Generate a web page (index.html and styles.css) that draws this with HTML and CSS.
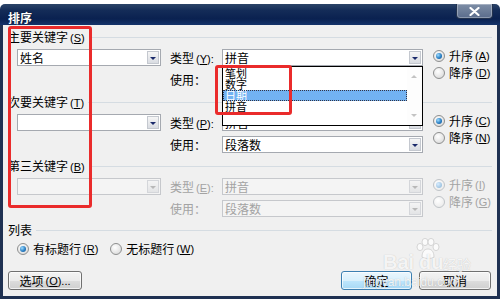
FILE: index.html
```html
<!DOCTYPE html>
<html lang="zh-CN">
<head>
<meta charset="utf-8">
<title>排序</title>
<link rel="stylesheet" href="styles.css">
</head>
<body>
<div class="strip"></div>
<div class="window">
  <div class="titlebar">
    <span class="title">排序</span>
    <span class="close"><svg width="11" height="9" viewBox="0 0 11 9"><path d="M1.5 1 L9.5 8 M9.5 1 L1.5 8" stroke="#fff" stroke-width="2.2" stroke-linecap="round"/></svg></span>
  </div>
  <div class="content">
    <section class="group g1">
      <div class="group-head"><span>主要关键字<span class="acc">(<u>S</u>)</span></span><i class="rule"></i></div>
      <div class="group-grid">
        <div class="combo key r1"><span class="val">姓名</span><span class="drop"></span></div>
        <span class="lbl r1">类型<span class="acc">(<u>Y</u>):</span></span>
        <div class="combo wide r1 host"><span class="val">拼音</span><span class="drop"></span>
          <div class="listbox">
            <div class="items">
              <div class="item">笔划</div>
              <div class="item">数字</div>
              <div class="item sel">日期</div>
              <div class="item">拼音</div>
            </div>
            <div class="sbar"><i class="up"></i><i class="down"></i></div>
          </div>
        </div>
        <div class="radios">
          <div class="rrow"><span class="radio on"></span>升序<span class="acc">(<u>A</u>)</span></div>
          <div class="rrow"><span class="radio"></span>降序<span class="acc">(<u>D</u>)</span></div>
        </div>
        <span class="lbl r2">使用：</span>
        <div class="combo wide r2"><span class="val">段落数</span><span class="drop"></span></div>
      </div>
    </section>

    <section class="group g2">
      <div class="group-head"><span>次要关键字<span class="acc">(<u>T</u>)</span></span><i class="rule"></i></div>
      <div class="group-grid">
        <div class="combo key r1"><span class="val"></span><span class="drop"></span></div>
        <span class="lbl r1">类型<span class="acc">(<u>P</u>):</span></span>
        <div class="combo wide r1"><span class="val">拼音</span><span class="drop"></span></div>
        <div class="radios">
          <div class="rrow"><span class="radio on"></span>升序<span class="acc">(<u>C</u>)</span></div>
          <div class="rrow"><span class="radio"></span>降序<span class="acc">(<u>N</u>)</span></div>
        </div>
        <span class="lbl r2">使用：</span>
        <div class="combo wide r2"><span class="val">段落数</span><span class="drop"></span></div>
      </div>
    </section>

    <section class="group g3">
      <div class="group-head"><span>第三关键字<span class="acc">(<u>B</u>)</span></span><i class="rule"></i></div>
      <div class="group-grid disabled">
        <div class="combo key r1"><span class="val"></span><span class="drop"></span></div>
        <span class="lbl r1">类型<span class="acc">(<u>E</u>):</span></span>
        <div class="combo wide r1"><span class="val">拼音</span><span class="drop"></span></div>
        <div class="radios">
          <div class="rrow"><span class="radio on"></span>升序<span class="acc">(<u>I</u>)</span></div>
          <div class="rrow"><span class="radio"></span>降序<span class="acc">(<u>G</u>)</span></div>
        </div>
        <span class="lbl r2">使用：</span>
        <div class="combo wide r2"><span class="val">段落数</span><span class="drop"></span></div>
      </div>
    </section>

    <section class="group g4">
      <div class="group-head"><span>列表</span><i class="rule"></i></div>
      <div class="list-row">
        <div class="rrow"><span class="radio on"></span>有标题行<span class="acc">(<u>R</u>)</span></div>
        <div class="rrow"><span class="radio"></span>无标题行<span class="acc">(<u>W</u>)</span></div>
      </div>
    </section>

    <div class="buttons">
      <span class="btn opt">选项<span class="acc">(<u>O</u>)...</span></span>
      <span class="btn ok">确定</span>
      <span class="btn cancel">取消</span>
    </div>
  </div>
</div>

<div class="mark mark1"></div>
<div class="mark mark2"></div>

<div class="watermark">
  <svg class="paw" width="28" height="22" viewBox="0 0 28 22">
    <g fill="#fbfbfb" stroke="#cdcdcd" stroke-width="0.8">
      <ellipse cx="6" cy="9" rx="3" ry="3.6"/>
      <ellipse cx="11" cy="4" rx="3" ry="3.6"/>
      <ellipse cx="17" cy="4" rx="3" ry="3.6"/>
      <ellipse cx="22" cy="9" rx="3" ry="3.6"/>
      <path d="M8 19 C8 13 11 11 14 11 C17 11 20 13 20 19 C18 21 10 21 8 19 Z"/>
    </g>
  </svg>
  <span class="wm-bai">Bai</span>
  <span class="wm-du">du</span>
  <span class="wm-jy">经验</span>
  <span class="wm-url">jingyan.baidu.com</span>
</div>
</body>
</html>
```
FILE: styles.css
```css
* { box-sizing: border-box; }
html, body { margin: 0; padding: 0; }
body {
  width: 500px;
  height: 299px;
  overflow: hidden;
  background: #fff;
  font-family: "Noto Sans CJK SC", sans-serif;
  font-size: 12px;
  line-height: 14px;
  color: #000;
}
u { text-decoration: underline; text-underline-offset: 1px; }
.acc {
  font-family: "Liberation Sans", sans-serif;
  font-size: 11px;
  margin-left: 2px;
}

.strip { height: 4px; background: #fff; }

.window {
  height: 295px;
  display: flex;
  flex-direction: column;
}

.titlebar {
  height: 21px;
  display: flex;
  align-items: flex-start;
  background: linear-gradient(to bottom, #2c4468 0%, #142c58 30%, #0a2150 70%, #14336a 100%);
  border-radius: 5px 5px 0 0;
  padding-left: 8px;
}
.title {
  color: #fff;
  font-weight: bold;
  font-size: 12px;
  line-height: 14px;
  margin-top: 7px;
  text-shadow: 0 0 2px rgba(0,0,0,0.6);
}
.close {
  margin-left: auto;
  margin-right: 7px;
  width: 37px;
  height: 15px;
  display: flex;
  align-items: center;
  justify-content: center;
  background: linear-gradient(to bottom, #7e8ea6, #5a6c8c);
  border: 1px solid #22324e;
  border-top: 0;
  border-radius: 0 0 4px 4px;
  box-shadow: inset 0 0 0 1px rgba(255,255,255,0.3);
}

.content {
  flex: 1;
  background: #f0f0f0;
  border: 3px solid #1f3152;
  border-top: 0;
  padding: 6px 5px 0 5px;
  display: flex;
  flex-direction: column;
}

.group-head {
  height: 12px;
  line-height: 12px;
  display: flex;
  align-items: center;
  gap: 4px;
  white-space: nowrap;
}
.rule {
  flex: 1;
  height: 1px;
  background: #d5dce2;
}
.g1 { margin-bottom: 8px; }
.g2, .g3 { margin-bottom: 7px; }

.group-grid {
  margin-top: 6px;
  padding-left: 9px;
  display: grid;
  grid-template-columns: 153px 52px 211px 1fr;
  grid-template-rows: 17px 17px;
  row-gap: 5px;
}
.r1 { grid-row: 1; }
.r2 { grid-row: 2; }
.key { grid-column: 1; width: 144px; }
.lbl { grid-column: 2; line-height: 17px; white-space: nowrap; }
.wide { grid-column: 3; width: 201px; }
.radios {
  grid-column: 4;
  grid-row: 1 / span 2;
  margin-top: -2px;
  display: flex;
  flex-direction: column;
}

.combo {
  position: relative;
  height: 17px;
  border: 1px solid #a5a9b0;
  background: #fff;
  display: flex;
  align-items: center;
  padding-left: 2px;
  line-height: 14px;
}
.combo .val { flex: 1; white-space: nowrap; }
.drop {
  width: 12px;
  height: 13px;
  margin-right: 1px;
  border: 1px solid #c4c8cf;
  background: linear-gradient(to bottom, #f6f6f6, #d9dce2);
  display: flex;
  align-items: center;
  justify-content: center;
}
.drop::after {
  content: "";
  border-left: 3px solid transparent;
  border-right: 3px solid transparent;
  border-top: 3px solid #1b2a6b;
  margin-top: 1px;
}

.disabled { color: #a3a3a3; }
.disabled .combo { border-color: #c6c8cc; background: #f4f4f4; }
.disabled .drop { border-color: #d4d6da; background: linear-gradient(to bottom, #f4f4f4, #e3e4e6); }
.disabled .drop::after { border-top-color: #b8b8b8; }
.disabled .radio { border-color: #c0c4c8; background: radial-gradient(circle at 40% 35%, #fff, #ececec 75%); }
.disabled .radio.on::after { background: radial-gradient(circle at 35% 35%, #d6ecff, #9fc3e0 70%); }

.rrow {
  height: 17px;
  display: flex;
  align-items: center;
  gap: 4px;
  white-space: nowrap;
}
.rrow .acc { margin-left: -2px; }
.radio {
  position: relative;
  width: 12px;
  height: 12px;
  border-radius: 50%;
  border: 1px solid #8e8f8f;
  background: radial-gradient(circle at 40% 35%, #ffffff, #e3e3e3 65%, #cfcfcf);
  flex: none;
}
.radio.on::after {
  content: "";
  position: absolute;
  left: 2px;
  top: 2px;
  width: 6px;
  height: 6px;
  border-radius: 50%;
  background: radial-gradient(circle at 35% 35%, #9edcff, #2a7fc4 55%, #0f4f8c);
}

.listbox {
  position: absolute;
  left: -1px;
  top: 16px;
  width: 201px;
  height: 60px;
  border: 1px solid #000;
  background: #fff;
  display: flex;
  z-index: 5;
}
.items { flex: 1; padding-top: 1px; }
.item {
  height: 11px;
  line-height: 11px;
  font-size: 11px;
  padding-left: 2px;
  white-space: nowrap;
}
.item.sel {
  background: #72b2f2;
  color: #fff;
  outline: 1px dotted #334;
  outline-offset: -1px;
}
.sbar {
  width: 15px;
  position: relative;
  background: #fdfdfd;
}
.sbar i {
  position: absolute;
  left: 4px;
  border-left: 3px solid transparent;
  border-right: 3px solid transparent;
}
.sbar .up { top: 8px; border-bottom: 3px solid #c3c3c3; }
.sbar .down { bottom: 8px; border-top: 3px solid #c3c3c3; }

.list-row {
  margin-top: 4px;
  padding-left: 9px;
  display: flex;
  gap: 12px;
}

.buttons {
  margin-top: 14px;
  display: flex;
  gap: 7px;
  padding-right: 1px;
}
.btn {
  height: 19px;
  border: 1px solid #707070;
  border-radius: 3px;
  background: linear-gradient(to bottom, #f3f3f3 0%, #ebebeb 50%, #dddddd 51%, #cfcfcf 100%);
  box-shadow: inset 0 0 0 1px rgba(255,255,255,0.7);
  display: flex;
  align-items: center;
  justify-content: center;
  white-space: nowrap;
}
.opt { width: 74px; }
.ok { width: 71px; margin-left: auto; border-color: #3c7fb1;
  background: linear-gradient(to bottom, #eaf6fd 0%, #d9f0fc 50%, #bee6fd 51%, #a7d9f5 100%); }
.cancel { width: 72px; }

.mark {
  position: absolute;
  border: 3px solid #ea2b2b;
  border-radius: 3px;
  z-index: 10;
}
.mark1 { left: 8px; top: 26px; width: 84px; height: 182px; }
.mark2 { left: 215px; top: 65px; width: 77px; height: 50px; }

.watermark {
  position: absolute;
  left: 0;
  top: 0;
  width: 500px;
  height: 299px;
  pointer-events: none;
  z-index: 8;
  color: rgba(255,255,255,0.85);
  text-shadow: 0 0 1px rgba(120,120,120,0.45);
  font-family: "Liberation Sans", Arial, sans-serif;
}
.watermark > * { position: absolute; }
.paw { left: 414px; top: 238px; }
.wm-bai { left: 383px; top: 252px; font-size: 20px; font-weight: bold; line-height: 20px; }
.wm-du { left: 419px; top: 252px; font-size: 20px; font-weight: bold; line-height: 20px; }
.wm-jy { left: 443px; top: 257px; font-size: 14px; line-height: 14px; font-family: "Noto Sans CJK SC", sans-serif; }
.wm-url { left: 363px; top: 276px; font-size: 12px; line-height: 12px; }
```
